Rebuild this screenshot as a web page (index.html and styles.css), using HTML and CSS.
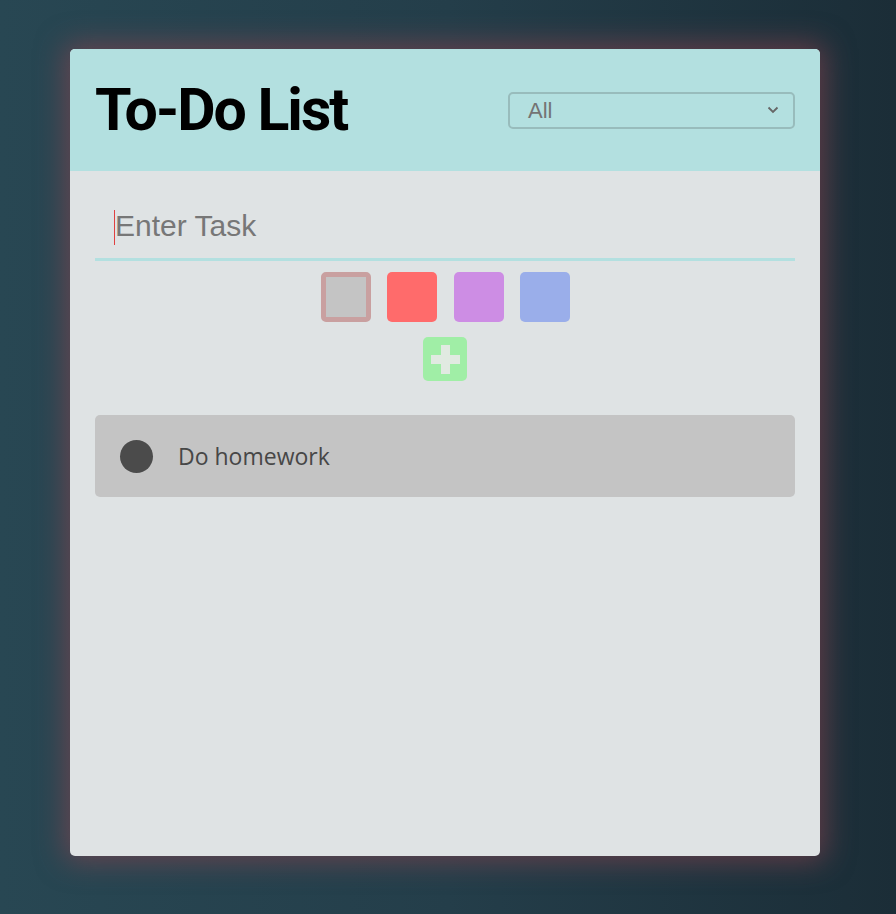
FILE: index.html
```html
<!DOCTYPE html>
<html>
<head>
<meta charset="utf-8">
<link rel="stylesheet" href="styles.css">
</head>
<body>
<div class="card">
  <header class="header">
    <h1 class="title">To-Do List</h1>
    <div class="select">
      <span class="select-text">All</span>
      <svg class="chevron" width="12" height="8" viewBox="0 0 12 8"><path d="M1.5 1.5 L6 6 L10.5 1.5" fill="none" stroke="#666" stroke-width="1.8"/></svg>
    </div>
  </header>
  <main class="content">
    <div class="input-row">
      <span class="caret"></span>
      <span class="placeholder">Enter Task</span>
    </div>
    <div class="swatches">
      <span class="swatch swatch-gray"></span>
      <span class="swatch swatch-red"></span>
      <span class="swatch swatch-purple"></span>
      <span class="swatch swatch-blue"></span>
    </div>
    <div class="add-row">
      <span class="add-btn">
        <svg width="29" height="29" viewBox="0 0 29 29"><path d="M10 0 h9 v10 h10 v9 h-10 v10 h-9 v-10 h-10 v-9 h10 z" fill="#e1eae1"/></svg>
      </span>
    </div>
    <div class="task">
      <span class="dot"></span>
      <span class="task-text">Do homework</span>
    </div>
  </main>
</div>
</body>
</html>
```

FILE: styles.css
```css
html, body {
  margin: 0;
  height: 100%;
}
body {
  background: linear-gradient(90deg, #284753 0%, #243e4a 50%, #1b2d37 100%);
  padding: 49px 0 0 70px;
  box-sizing: border-box;
  overflow: hidden;
}
.card {
  width: 750px;
  height: 807px;
  background: #dfe3e4;
  border-radius: 5px;
  box-shadow: 0 0 28px 6px rgba(150, 70, 80, 0.55);
  overflow: hidden;
}
.header {
  height: 122px;
  background: #b3e0e0;
  display: flex;
  align-items: center;
  justify-content: space-between;
  padding: 0 25px;
  box-sizing: border-box;
}
.title {
  margin: 0;
  font-family: Roboto, sans-serif;
  font-weight: 700;
  font-size: 59px;
  letter-spacing: -2px;
  line-height: 1;
  color: #000;
  position: relative;
  top: -1px;
}
.select {
  width: 287px;
  height: 37px;
  box-sizing: border-box;
  border: 2px solid #98bcbc;
  border-radius: 5px;
  display: flex;
  align-items: center;
  justify-content: space-between;
  padding: 0 14px 0 18px;
}
.select-text {
  font-family: "Liberation Sans", Arial, sans-serif;
  font-size: 22px;
  color: #747474;
  position: relative;
  top: 1px;
}
.content {
  padding: 25px;
}
.input-row {
  height: 62px;
  border-bottom: 3px solid #b3e0e0;
  display: flex;
  align-items: center;
  padding-left: 19px;
}
.caret {
  width: 1px;
  height: 35px;
  background: #e04040;
}
.placeholder {
  font-family: "Liberation Sans", Arial, sans-serif;
  font-size: 30px;
  color: #777;
  position: relative;
  top: -1px;
}
.swatches {
  display: flex;
  justify-content: center;
  gap: 16.5px;
  margin-top: 11px;
  padding-left: 1px;
}
.swatch {
  width: 50px;
  height: 50px;
  border-radius: 5px;
  box-sizing: border-box;
}
.swatch-gray {
  background: #c4c4c4;
  border: 5px solid #c9a0a0;
}
.swatch-red { background: #ff6b6b; }
.swatch-purple { background: #cd8de4; }
.swatch-blue { background: #9aaeea; }
.add-row {
  display: flex;
  justify-content: center;
  margin-top: 15px;
}
.add-btn {
  width: 44px;
  height: 44px;
  border-radius: 5px;
  background: #a0eea6;
  display: flex;
  align-items: center;
  justify-content: center;
}
.add-btn svg { display: block; }
.task {
  margin-top: 34px;
  height: 82px;
  background: #c4c4c4;
  border-radius: 5px;
  display: flex;
  align-items: center;
  padding-left: 25px;
}
.dot {
  width: 33px;
  height: 33px;
  border-radius: 50%;
  background: #4b4b4b;
}
.task-text {
  margin-left: 25px;
  font-family: "Open Sans", sans-serif;
  font-size: 23px;
  color: #474747;
}
```
